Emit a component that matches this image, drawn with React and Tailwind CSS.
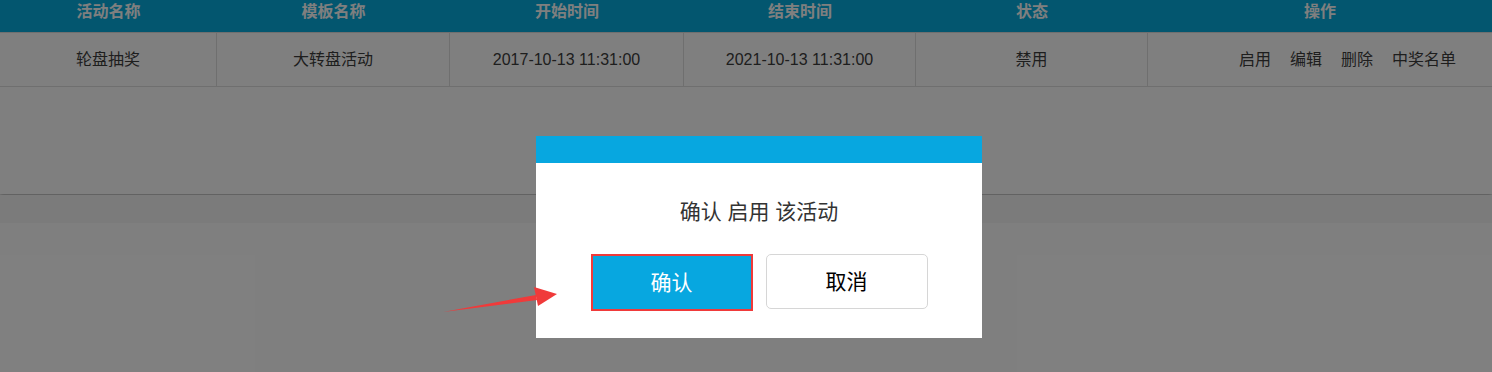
const columns = [
  { title: '活动名称', width: 'w-[217px]' },
  { title: '模板名称', width: 'w-[233px]' },
  { title: '开始时间', width: 'w-[234px]' },
  { title: '结束时间', width: 'w-[232px]' },
  { title: '状态', width: 'w-[232px]' },
  { title: '操作', width: 'flex-1' },
]

const row = ['轮盘抽奖', '大转盘活动', '2017-10-13 11:31:00', '2021-10-13 11:31:00', '禁用']

const cjk = { fontFamily: '"Liberation Sans", "Noto Sans CJK SC", sans-serif' }

function ActivityTable() {
  return (
    <div className="bg-white shadow-[0_2px_4px_rgba(0,0,0,0.3)] h-[194px]">
      {/* Header */}
      <div className="flex h-[32px] bg-[#06acde]">
        {columns.map((c) => (
          <div
            key={c.title}
            className={`${c.width} text-center text-[16px] font-bold leading-[24px] text-white`}
          >
            {c.title}
          </div>
        ))}
      </div>

      {/* Row */}
      <div className="flex h-[55px] border-t border-b border-[#dedede] text-[16px] text-[#3c3c3c]">
        {row.map((v, i) => (
          <div
            key={i}
            className={`${columns[i].width} flex items-center justify-center border-r border-[#dedede]`}
          >
            {v}
          </div>
        ))}
        <div className="flex-1 flex items-center justify-end gap-[19px] pr-[36px]">
          <span>启用</span>
          <span>编辑</span>
          <span>删除</span>
          <span>中奖名单</span>
        </div>
      </div>
    </div>
  )
}

function ConfirmDialog() {
  return (
    <div className="w-[446px] h-[202px] bg-white flex flex-col items-center">
      <div className="w-full h-[27px] bg-[#07a7e0]" />
      <div className="mt-[35px] text-[21px] leading-[28px] text-[#333]">确认 启用 该活动</div>
      <div className="mt-[28px] flex gap-[13px]">
        <button className="w-[162px] h-[57px] bg-[#07a7e0] border-2 border-[#f03a3a] text-white text-[21px]">
          确认
        </button>
        <button className="w-[162px] h-[55px] bg-white border border-[#d6d6d6] rounded-[5px] text-black text-[21px]">
          取消
        </button>
      </div>
    </div>
  )
}

export default function App() {
  return (
    <div className="relative h-[372px] bg-white overflow-hidden" style={cjk}>
      <ActivityTable />
      <div className="h-[28px] bg-[#f6f6f6] mt-[1px]" />

      {/* Mask */}
      <div className="absolute inset-0 bg-black/50" />

      {/* Dialog */}
      <div className="absolute left-[536px] top-[136px]">
        <ConfirmDialog />
      </div>

      {/* Annotation arrow */}
      <svg className="absolute left-0 top-0" width="1492" height="372">
        <path d="M443 312 L536 295 L537 300 Z" fill="#f03a3a" />
        <path d="M557 294 L534 287 L538 306 Z" fill="#f03a3a" />
      </svg>
    </div>
  )
}
